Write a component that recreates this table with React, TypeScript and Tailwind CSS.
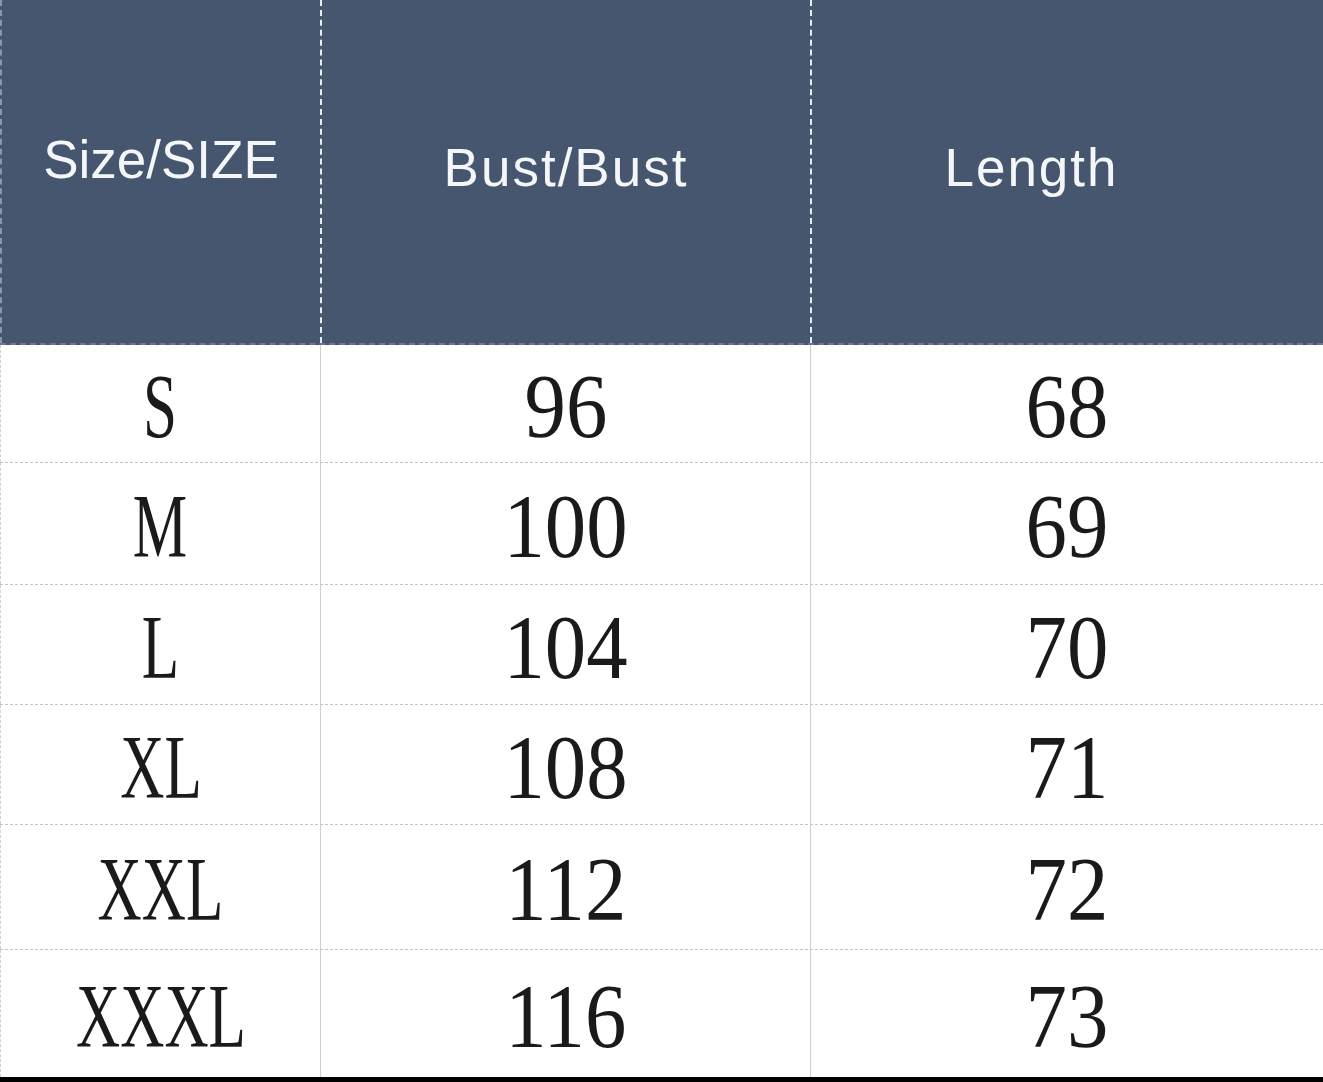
import React from "react";

const rows: { size: string; bust: string; length: string; h: string }[] = [
  { size: "S", bust: "96", length: "68", h: "h-[118px]" },
  { size: "M", bust: "100", length: "69", h: "h-[122px]" },
  { size: "L", bust: "104", length: "70", h: "h-[120px]" },
  { size: "XL", bust: "108", length: "71", h: "h-[120px]" },
  { size: "XXL", bust: "112", length: "72", h: "h-[125px]" },
  { size: "XXXL", bust: "116", length: "73", h: "h-[127px]" },
];

const serif = "font-['Liberation_Serif',serif]";

export default function App() {
  return (
    <div className="w-[1323px] h-[1082px] bg-white overflow-hidden flex flex-col">
      {/* header */}
      <div className="h-[345px] bg-[#47566f] grid grid-cols-[320px_490px_1fr] border-b-2 border-dashed border-[#6b7890] font-['Liberation_Sans',Arial,sans-serif] text-[#f4f6fa] text-[53px] leading-none">
        <div className="flex items-center justify-center pb-[25px] border-l-2 border-dashed border-[#8a96ab]">
          Size/SIZE
        </div>
        <div className="flex items-center justify-center pb-[8px] tracking-[2px] border-l-2 border-dashed border-[#e8ecf2]">
          Bust/Bust
        </div>
        <div className="flex items-center justify-center pb-[8px] pr-[72px] tracking-[2px] border-l-2 border-dashed border-[#e8ecf2]">
          Length
        </div>
      </div>
      {/* body */}
      {rows.map((r, i) => (
        <div
          key={r.size}
          className={`${r.h} grid grid-cols-[320px_490px_1fr] text-[#1a1a1a] text-[90px] leading-none ${serif} ${
            i < rows.length - 1 ? "border-b border-dashed border-[#c4c4c4]" : ""
          }`}
        >
          <div className="flex items-center justify-center border-l border-dashed border-[#d0d0d0]">
            <span className="inline-block scale-x-[0.68] pt-[6px]">{r.size}</span>
          </div>
          <div className="flex items-center justify-center border-l border-[#cfcfcf]">
            <span className="inline-block scale-x-[0.92] pt-[6px]">{r.bust}</span>
          </div>
          <div className="flex items-center justify-center border-l border-[#cfcfcf]">
            <span className="inline-block scale-x-[0.92] pt-[6px]">{r.length}</span>
          </div>
        </div>
      ))}
      <div className="flex-1 bg-black" />
    </div>
  );
}
